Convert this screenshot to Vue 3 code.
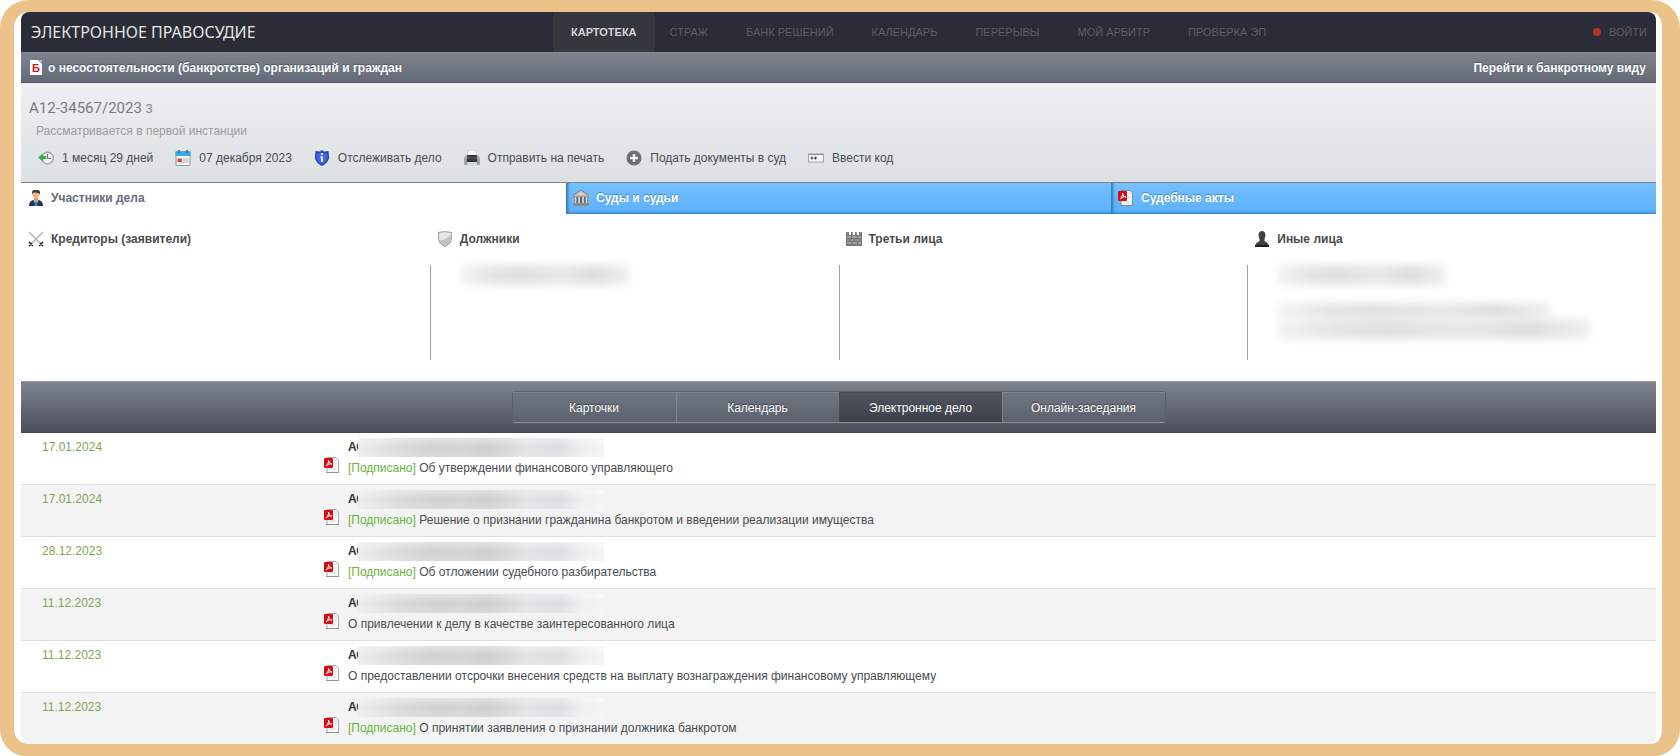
<script setup>
const nav = ['КАРТОТЕКА', 'СТРАЖ', 'БАНК РЕШЕНИЙ', 'КАЛЕНДАРЬ', 'ПЕРЕРЫВЫ', 'МОЙ АРБИТР', 'ПРОВЕРКА ЭП']
const views = ['Карточки', 'Календарь', 'Электронное дело', 'Онлайн-заседания']
const documents = [
  { date: '17.01.2024', signed: true, title: 'Об утверждении финансового управляющего' },
  { date: '17.01.2024', signed: true, title: 'Решение о признании гражданина банкротом и введении реализации имущества' },
  { date: '28.12.2023', signed: true, title: 'Об отложении судебного разбирательства' },
  { date: '11.12.2023', signed: false, title: 'О привлечении к делу в качестве заинтересованного лица' },
  { date: '11.12.2023', signed: false, title: 'О предоставлении отсрочки внесения средств на выплату вознаграждения финансовому управляющему' },
  { date: '11.12.2023', signed: true, title: 'О принятии заявления о признании должника банкротом' }
]
</script>

<template>
  <div class="frame">
    <div class="page">
      <header class="topbar">
        <a class="brand" href="#">ЭЛЕКТРОННОЕ ПРАВОСУДИЕ</a>
        <nav class="nav">
          <a v-for="(item, i) in nav" :key="item" href="#" :class="{ active: i === 0 }">{{ item }}</a>
        </nav>
        <a class="login" href="#"><span class="dot"></span>ВОЙТИ</a>
      </header>

      <div class="category">
        <span class="b-icon">Б</span>
        <span>о несостоятельности (банкротстве) организаций и граждан</span>
        <a href="#">Перейти к банкротному виду</a>
      </div>

      <section class="case">
        <h1>А12-34567/2023 <small>3</small></h1>
        <p>Рассматривается в первой инстанции</p>
        <div class="actions">
          <span class="action">
            <svg viewBox="0 0 16 16" aria-hidden="true">
              <circle cx="9.500" cy="8" r="5.800" fill="#f4f6f6" stroke="#959b9d" stroke-width="1.300" />
              <path d="M0 7.500l5-4v2.500h3v3H5v2.500z" fill="#36ad3c" />
              <path d="M9.500 4v4.500h3.500" fill="none" stroke="#687073" stroke-width="1.200" />
            </svg>1 месяц 29 дней
          </span>
          <span class="action">
            <svg viewBox="0 0 16 16" aria-hidden="true">
              <rect x="1" y="1.500" width="14" height="14" rx="1" fill="#f4f8f9" stroke="#8799a2" />
              <path d="M.5 1.500h15V6H.5z" fill="#35aae3" />
              <path d="M4 0v3M12 0v3" stroke="#226b91" stroke-width="1.500" />
              <path d="M8 8.500h5v4H8zM3 13h6" fill="#cdd5d9" stroke="#c0cace" stroke-width=".8" />
              <rect x="2.500" y="8.500" width="4.500" height="3.500" fill="#e64534" />
            </svg>07 декабря 2023
          </span>
          <button class="action">
            <svg viewBox="0 0 16 16" aria-hidden="true">
              <path d="M8 0l2 1.500L14.500 1 15 7c0 4-3 7-7 9-4-2-7-5-7-9l.500-6L6 1.500z" fill="#2648c8" />
              <path d="M8 1.500l2 1.500 3.500-.500.500 4.500c0 3-2 5.500-6 7.500-4-2-6-4.500-6-7.500l.500-4.500L6 3z" fill="#4468e0" stroke="#1b3397" stroke-width=".5" />
              <path d="M8 3v2M8 6.500v5.500M6.500 7H8" stroke="#fff" stroke-width="1.700" />
            </svg>Отслеживать дело
          </button>
          <button class="action">
            <svg viewBox="0 0 16 16" aria-hidden="true">
              <path d="M4 0h7l1.500 2v4H3.500z" fill="#f7f7f7" stroke="#b5bbbd" stroke-width=".7" />
              <path d="M2 5h12l2 3v7H0V8z" fill="#a3a8aa" />
              <path d="M3.500 5h9l1 7h-11z" fill="#33383c" />
              <path d="M3.500 8h9" stroke="#60686c" />
              <path d="M3 12h10v3.500H3z" fill="#d3d7d8" />
              <path d="M13.500 12.500h2" stroke="#50af4b" />
            </svg>Отправить на печать
          </button>
          <button class="action">
            <svg viewBox="0 0 16 16" aria-hidden="true">
              <circle cx="8" cy="8" r="7.500" fill="#686868" />
              <circle cx="8" cy="8" r="6.300" fill="none" stroke="#7f7f7f" />
              <path d="M8 4v8M4 8h8" stroke="#f4f4f4" stroke-width="2.500" />
            </svg>Подать документы в суд
          </button>
          <button class="action">
            <svg viewBox="0 0 16 16" aria-hidden="true">
              <rect x=".5" y="4" width="15" height="8" fill="#f5f5f5" stroke="#a4a6a7" />
              <path d="M1 4.500h14" stroke="#858788" />
              <path d="M2.500 8h3M6 8h3M4 6.500v3M7.500 6.500v3" stroke="#4b4b4b" stroke-width="1.200" />
            </svg>Ввести код
          </button>
        </div>
      </section>

      <nav class="tabs">
        <button class="tab current">
          <svg viewBox="0 0 16 16" aria-hidden="true">
            <path d="M1 16c0-4 2-5 4-6h6c2 1 4 2 4 6z" fill="#29345a" />
            <path d="M5.500 9.500L8 16l2.500-6.500z" fill="#e5edf4" />
            <path d="M7.300 11h1.400l.8 5h-3z" fill="#4288bc" />
            <path d="M6 7h4v3l-2 2-2-2z" fill="#dc9b62" />
            <ellipse cx="8" cy="4.800" rx="3" ry="4" fill="#edb67c" />
            <path d="M4.500 5C3 0 6-.500 8 0c4-.500 5 2 3.500 5L11 3C8 3 7 2 5 3z" fill="#49362a" />
          </svg>Участники дела
        </button>
        <button class="tab">
          <svg viewBox="0 0 16 16" aria-hidden="true">
            <path d="M8 0l8 5v2H0V5z" fill="#b8babb" stroke="#74797d" stroke-width=".8" />
            <path d="M1 7h14v6H1z" fill="#606569" />
            <path d="M2.500 7v7M6 7v7M10 7v7M13.500 7v7" stroke="#d7d7d5" stroke-width="1.800" />
            <path d="M0 13h16v3H0z" fill="#8c8f90" /><path d="M4 5h8L8 2z" fill="#d8d8d6" />
          </svg>Суды и судьи
        </button>
        <button class="tab">
          <svg viewBox="0 0 16 16" aria-hidden="true">
            <path d="M3 .5h9l2.500 2.500v12.500H3z" fill="#f3f5f2" stroke="#799096" />
            <path d="M10 4h3M10 7h3M5 12h7" stroke="#d5dcda" />
            <rect x="0" y="1" width="9" height="10" rx="1" fill="#d50c13" />
            <path d="M2 9c2-2 3-4 2.500-6 .5 3 2 4 3.500 4-2-.500-4 0-6 2" fill="none" stroke="#fff" />
          </svg>Судебные акты
        </button>
      </nav>

      <section class="parties">
        <div class="party">
          <h2>
            <svg viewBox="0 0 16 16" aria-hidden="true">
              <path d="M1 1l11 11M15 1L4 12" stroke="#989898" stroke-width="1.400" />
              <path d="M1 1l11 11M15 1L4 12" stroke="#dedede" stroke-width=".5" />
              <path d="M1 11l4 4M1 15l3-3M15 11l-4 4M15 15l-3-3" stroke="#292929" stroke-width="1.600" />
            </svg>Кредиторы (заявители)
          </h2>
          <div class="people"></div>
        </div>
        <div class="party">
          <h2>
            <svg viewBox="0 0 16 16" aria-hidden="true">
              <path d="M1 1l4-.5L8 0l3 .5 4 .5v6c0 4-2 6.500-7 9-5-2.500-7-5-7-9z" fill="#a0a2a4" />
              <path d="M2 2l6-1 6 1v5c0 3-2 5.500-6 7.500-4-2-6-4.500-6-7.500z" fill="#e4e5e6" />
              <path d="M14 5c-3 0-5 5-11 4 1 3 3 4 5 5.500 4-2 6-4.500 6-7.500z" fill="#bfc1c4" />
            </svg>Должники
          </h2>
          <div class="people"><span class="redacted name"></span></div>
        </div>
        <div class="party">
          <h2>
            <svg viewBox="0 0 16 16" aria-hidden="true">
              <path d="M0 1h3v3h2V1h2v3h2V1h2v3h2V1h3v14H0z" fill="#77777a" />
              <path d="M1 6h4M6 6h5M12 6h3M1 12h4M6 12h5M12 12h3" stroke="#a49f9e" stroke-width="2" />
              <path d="M1 9h2M4 9h4M9 9h4M14 9h1" stroke="#899481" stroke-width="2" />
              <path d="M1 2h1M6 2h1M10 2h1M14 2h1" stroke="#b5b0b0" />
            </svg>Третьи лица
          </h2>
          <div class="people"></div>
        </div>
        <div class="party">
          <h2>
            <svg viewBox="0 0 16 16" aria-hidden="true">
              <path d="M5.500 8C3.500 3 5 0 8 0s4.500 3 2.500 8v2c1 1 4 1 4.500 6H1c.5-5 3.500-5 4.500-6z" fill="#404040" />
              <path d="M1 15h14" stroke="#1f1f1f" stroke-width="2" />
            </svg>Иные лица
          </h2>
          <div class="people">
            <span class="redacted name"></span>
            <span class="redacted line"></span>
            <span class="redacted long"></span>
          </div>
        </div>
      </section>

      <div class="viewbar">
        <div class="segments">
          <button v-for="(view, i) in views" :key="view" :class="{ active: i === 2 }">{{ view }}</button>
        </div>
      </div>

      <table class="documents">
        <tbody>
          <tr v-for="(doc, i) in documents" :key="i">
            <td class="date">{{ doc.date }}</td>
            <td>
              <div class="court"><b>АС</b><span class="veil"></span></div>
              <div class="act">
                <svg viewBox="0 0 16 16" aria-hidden="true">
                  <path d="M3 .5h9l2.500 2.500v12.500H3z" fill="#f5f7f5" stroke="#9eadb0" />
                  <path d="M10 4h3M10 7h3M5 12h7" stroke="#d5dcda" />
                  <path d="M2 15.500h13" stroke="#84989a" />
                  <rect x="0" y="1" width="9" height="10" rx="1" fill="#d50c13" />
                  <path d="M2 9c2-2 3-4 2.500-6 .5 3 2 4 3.500 4-2-.500-4 0-6 2" fill="none" stroke="#fff" />
                </svg>
                <a href="#"><span v-if="doc.signed" class="signed">[Подписано]</span> {{ doc.title }}</a>
              </div>
            </td>
          </tr>
        </tbody>
      </table>
    </div>
  </div>
</template>

<style>
body {
  background: #fff;
}
</style>

<style scoped>
* {
  box-sizing: border-box;
}

.frame {
  min-height: 100vh;
  padding-left: 7px;
  padding-right: 6px;
  border: solid #ebc38a;
  border-width: 12px 18px 13px 14px;
  border-radius: 28px;
  background: #fff;
  overflow: hidden;
  font: 12px/16px "Liberation Sans", Arial, sans-serif;
  color: #484c50;
}

.page {
  border-radius: 8px;
  overflow: hidden;
}

a {
  color: inherit;
  text-decoration: none;
}

button {
  margin: 0;
  padding: 0;
  border: 0;
  background: none;
  font: inherit;
  color: inherit;
  text-align: left;
}

svg {
  flex: none;
  width: 16px;
  height: 16px;
}

.topbar {
  display: flex;
  align-items: center;
  height: 40px;
  background: #2a2c37;
  font-size: 11px;
  color: #5b5f69;
}

.brand {
  flex: 0 0 532px;
  padding-left: 10px;
  font: 16px/24px "Noto Sans", sans-serif;
  color: #e4e4e5;
}

.nav {
  display: flex;
  align-self: stretch;
}

.nav a {
  display: flex;
  align-items: center;
  padding: 0 19px;
}

.nav .active {
  margin-right: -4px;
  padding: 0 18px;
  background: #35373f;
  color: #d5d5d7;
  font-weight: bold;
}

.login {
  display: flex;
  align-items: center;
  gap: 8px;
  margin-left: auto;
  padding-right: 9px;
}

.dot {
  width: 8px;
  height: 8px;
  border-radius: 50%;
  background: #b92d20;
}

.category {
  display: flex;
  align-items: center;
  gap: 6px;
  height: 31px;
  padding: 0 10px 0 9px;
  border-top: 1px solid #858993;
  border-bottom: 1px solid #535966;
  background: linear-gradient(#7e838e, #646a77);
  font-weight: bold;
  color: #fff;
  text-shadow: 0 -1px 1px #4c5260;
}

.category a {
  margin-left: auto;
}

.b-icon {
  width: 12px;
  height: 15px;
  background: linear-gradient(225deg, #b3b8bf 3px, #fff 3px);
  font-size: 11px;
  line-height: 16px;
  text-align: center;
  text-shadow: none;
  color: #c32029;
}

.case {
  padding: 14px 8px 16px;
  border-bottom: 1px solid #7d848c;
  background: linear-gradient(#eeeff0, #dde1e3);
}

h1 {
  margin: 0;
  font: 15px/22px Roboto, sans-serif;
  color: #787b7f;
}

h1 small {
  font-size: 13px;
  color: #85898d;
}

.case p {
  margin: 3px 0 11px 7px;
  color: #999da1;
}

.actions {
  display: flex;
  gap: 22px;
  padding-left: 9px;
}

.action {
  display: flex;
  align-items: center;
  gap: 8px;
}

.tabs {
  display: grid;
  grid-template-columns: repeat(3, 1fr);
}

.tab {
  display: flex;
  align-items: center;
  gap: 7px;
  height: 31px;
  padding: 0 7px 1px;
  background: linear-gradient(#76c1ff, #59b0fc);
  box-shadow: inset 3px -2px 3px -1px #2f76b5;
  font-weight: bold;
  color: #fff;
  text-shadow: 0 -1px 1px #4583b4;
}

.tab.current {
  background: #fff;
  box-shadow: none;
  color: #686c7c;
  text-shadow: none;
}

.parties {
  display: grid;
  grid-template-columns: repeat(4, 1fr);
  padding: 16px 0 21px;
}

h2 {
  display: flex;
  align-items: center;
  gap: 7px;
  margin: 0 0 17px;
  padding-left: 7px;
  font: bold 12px/18px "Liberation Sans", Arial, sans-serif;
}

.people {
  display: flex;
  flex-direction: column;
  height: 95px;
  padding-left: 30px;
}

.party + .party .people {
  border-left: 1px solid #9a9fa9;
}

.redacted {
  height: 16px;
  background: linear-gradient(90deg, #f2f2f2, #e4e4e4 20%, #e0e0e0 35%, #e8e8e8 60%, #dedede 80%, #efefef);
  filter: blur(4px);
}

.name {
  width: 168px;
  height: 20px;
  margin-bottom: 18px;
}

.line {
  width: 272px;
}

.long {
  width: 312px;
  height: 20px;
}

.viewbar {
  display: flex;
  justify-content: center;
  padding: 9px 0;
  border-top: 1px solid #999da5;
  border-bottom: 1px solid #444954;
  background: linear-gradient(#7e848f, #4b505c);
}

.segments {
  display: grid;
  grid-template-columns: repeat(4, 1fr);
  width: 40%;
  height: 32px;
  border: 1px solid #5a606c;
  border-bottom-color: #8a8f9a;
  border-radius: 3px;
}

.segments button {
  border-top: 1px solid #7f8590;
  border-left: 1px solid #7f8590;
  background: linear-gradient(#707682, #5a606c);
  text-align: center;
  color: #fff;
  text-shadow: 0 -1px 1px #3b404a;
}

.segments button:first-child {
  border-left: 0;
}

.segments .active {
  border-color: #474b55;
  background: linear-gradient(#50545e, #3c4049);
}

.documents {
  width: 100%;
  border-spacing: 0;
}

tr:nth-child(even) {
  background: #f3f3f3;
}

td {
  height: 52px;
  padding: 5px 0;
  border-bottom: 1px solid #dfdfdf;
  vertical-align: top;
}

tr:last-child td {
  height: 51px;
  border-bottom: 0;
}

.date {
  width: 303px;
  padding-left: 21px;
  line-height: 19px;
  color: #7fa653;
}

.court {
  display: flex;
  padding-left: 24px;
  line-height: 19px;
  color: #333;
}

.court b {
  width: 10px;
  white-space: nowrap;
}

.veil {
  z-index: 1;
  width: 246px;
  height: 19px;
  background:
    linear-gradient(#ffffff66, #ffffff00 50%, #ffffff33),
    linear-gradient(90deg, #ececec, #d9d9d9 18%, #d0d0d0 32%, #d3d3d3 42%, #cdcdcd 52%, #d6d6d6 60%, #e1e2e3 68%, #dcdde0 82%, #eceded 90%, #f3f4f4);
}

.act {
  display: flex;
  gap: 8px;
  line-height: 22px;
}

.signed {
  color: #6cb33e;
}
</style>
